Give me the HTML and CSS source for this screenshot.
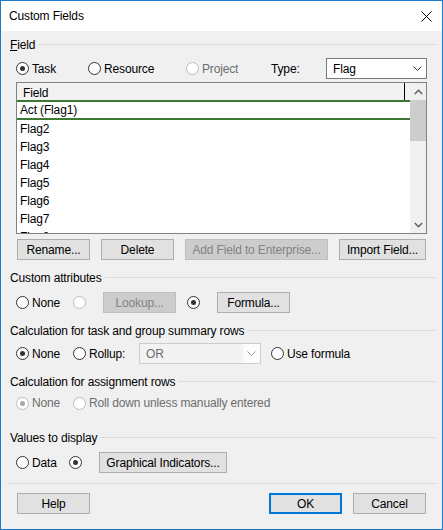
FILE: index.html
```html
<!DOCTYPE html>
<html>
<head>
<meta charset="utf-8">
<link rel="stylesheet" href="styles.css">
</head>
<body>
<div class="window">
  <div class="titlebar">
    <span class="title">Custom Fields</span>
    <svg class="close" width="11" height="11" viewBox="0 0 11 11"><path d="M0.5 0.5 L10.5 10.5 M10.5 0.5 L0.5 10.5" stroke="#000" stroke-width="1" fill="none"/></svg>
  </div>
  <div class="content">
    <div class="group g-field"><span class="glabel"><u>F</u>ield</span><span class="gline"></span></div>
    <div class="row r-type">
      <label class="radio on w-task"><span class="circle"></span>Task</label>
      <label class="radio w-resource"><span class="circle"></span>Resource</label>
      <label class="radio dis w-project"><span class="circle"></span>Project</label>
      <span class="typelabel">Type:</span>
      <div class="combo combo-type"><span class="combo-text">Flag</span><span class="combo-arrow"><svg width="9" height="5" viewBox="0 0 9 5"><path d="M0.5 0.5 L4.5 4.5 L8.5 0.5" stroke="#333" stroke-width="1" fill="none"/></svg></span></div>
    </div>
    <div class="listbox">
      <div class="lb-main">
        <div class="lb-header"><span class="lb-col">Field</span></div>
        <div class="lb-rows">
          <div class="lb-row sel">Act (Flag1)</div>
          <div class="lb-row">Flag2</div>
          <div class="lb-row">Flag3</div>
          <div class="lb-row">Flag4</div>
          <div class="lb-row">Flag5</div>
          <div class="lb-row">Flag6</div>
          <div class="lb-row">Flag7</div>
          <div class="lb-row">Flag8</div>
        </div>
      </div>
      <div class="scrollbar">
        <div class="sb-btn"><svg width="9" height="6" viewBox="0 0 9 6"><path d="M0.8 5 L4.5 1.3 L8.2 5" stroke="#606060" stroke-width="1.5" fill="none"/></svg></div>
        <div class="sb-thumb"></div>
        <div class="sb-track"></div>
        <div class="sb-btn"><svg width="9" height="6" viewBox="0 0 9 6"><path d="M0.8 1 L4.5 4.7 L8.2 1" stroke="#606060" stroke-width="1.5" fill="none"/></svg></div>
      </div>
    </div>
    <div class="btnrow r-buttons">
      <button class="btn w-73">Rename...</button>
      <button class="btn w-73">Delete</button>
      <button class="btn disabled w-add">Add Field to Enterprise...</button>
      <button class="btn w-import">Import Field...</button>
    </div>

    <div class="group g-custom"><span class="glabel">Custom attributes</span><span class="gline"></span></div>
    <div class="row r-custom">
      <label class="radio w-none"><span class="circle"></span>None</label>
      <label class="radio dis w-30"><span class="circle"></span></label>
      <button class="btn disabled w-73">Lookup...</button>
      <label class="radio on w-30 ml-11"><span class="circle"></span></label>
      <button class="btn w-73">Formula...</button>
    </div>

    <div class="group g-calc"><span class="glabel">Calculation for task and group summary rows</span><span class="gline"></span></div>
    <div class="row r-calc">
      <label class="radio on w-none2"><span class="circle"></span>None</label>
      <label class="radio w-rollup"><span class="circle"></span>Rollup:</label>
      <div class="combo combo-dis"><span class="combo-text">OR</span><span class="combo-arrow"><svg width="9" height="5" viewBox="0 0 9 5"><path d="M0.5 0.5 L4.5 4.5 L8.5 0.5" stroke="#a0a0a0" stroke-width="1" fill="none"/></svg></span></div>
      <label class="radio ml-10"><span class="circle"></span>Use formula</label>
    </div>

    <div class="group g-assign"><span class="glabel">Calculation for assignment rows</span><span class="gline"></span></div>
    <div class="row r-assign">
      <label class="radio dis on w-none"><span class="circle"></span>None</label>
      <label class="radio dis"><span class="circle"></span>Roll down unless manually entered</label>
    </div>

    <div class="group g-values"><span class="glabel">Values to display</span><span class="gline"></span></div>
    <div class="row r-values">
      <label class="radio w-data"><span class="circle"></span>Data</label>
      <label class="radio on w-30"><span class="circle"></span></label>
      <button class="btn w-graph">Graphical Indicators...</button>
    </div>

    <div class="separator"></div>

    <div class="btnrow r-bottom">
      <button class="btn w-73">Help</button>
      <span class="spacer"></span>
      <button class="btn default w-73">OK</button>
      <button class="btn w-73">Cancel</button>
    </div>
  </div>
</div>
</body>
</html>
```
FILE: styles.css
```css
* { box-sizing: border-box; }
html, body { margin: 0; padding: 0; }
body {
  width: 443px;
  height: 530px;
  font-family: "Liberation Sans", Arial, sans-serif;
  font-size: 12px;
  letter-spacing: -0.15px;
  color: #000;
  background: #fff;
}
.window {
  width: 443px;
  height: 530px;
  border: 1px solid #1979ca;
  background: #f0f0f0;
  display: flex;
  flex-direction: column;
}
.titlebar {
  height: 30px;
  flex: none;
  background: #fff;
  display: flex;
  align-items: center;
  justify-content: space-between;
  padding: 0 10px 0 8px;
}
.title { font-size: 12px; }
.close { display: block; margin-top: 1px; }

.content {
  padding: 0 6px 0 9px;
  display: flex;
  flex-direction: column;
}

.group {
  display: flex;
  align-items: center;
  gap: 3px;
  height: 16px;
  flex: none;
}
.glabel { white-space: nowrap; }
.gline { flex: 1; height: 1px; background: #dcdcdc; margin-top: -1px; }

.row {
  display: flex;
  align-items: center;
  padding-left: 6px;
  flex: none;
}

.radio {
  display: flex;
  align-items: center;
  gap: 3px;
  white-space: nowrap;
  flex: none;
}
.circle {
  width: 13px;
  height: 13px;
  border: 1px solid #333;
  border-radius: 50%;
  background: #fff;
  display: flex;
  align-items: center;
  justify-content: center;
  flex: none;
}
.radio.on .circle::after {
  content: "";
  width: 5px;
  height: 5px;
  border-radius: 50%;
  background: #333;
}
.radio.dis { color: #6d6d6d; }
.radio.dis .circle { border-color: #bcbcbc; }
.radio.dis.on .circle::after { background: #a8a8a8; }

.w-task { width: 72px; }
.w-resource { width: 98px; }
.w-project { width: 85px; }
.w-none { width: 57px; }
.w-none2 { width: 57px; }
.w-rollup { width: 66px; }
.w-data { width: 53px; }
.w-30 { width: 30px; }
.ml-11 { margin-left: 11px; }
.ml-10 { margin-left: 10px; }

.typelabel { width: 55px; flex: none; }

.combo {
  display: flex;
  align-items: stretch;
  height: 21px;
  flex: none;
}
.combo-type {
  width: 101px;
  border: 1px solid #7a7a7a;
  background: #fff;
}
.combo-text {
  flex: 1;
  display: flex;
  align-items: center;
  padding-left: 6px;
}
.combo-arrow {
  width: 17px;
  display: flex;
  align-items: center;
  justify-content: center;
}
.combo-dis {
  width: 122px;
  border: 1px solid #cccccc;
  background: #fcfcfc;
  color: #6d6d6d;
}
.combo-dis .combo-text { background: #f3f3f3; }

.r-type { margin-top: 5px; height: 21px; }

.listbox {
  margin-top: 3px;
  margin-left: 6px;
  width: 411px;
  height: 152px;
  border: 1px solid #828282;
  background: #fff;
  display: flex;
  flex: none;
}
.lb-main {
  flex: 1;
  display: flex;
  flex-direction: column;
  overflow: hidden;
}
.lb-header {
  height: 17px;
  flex: none;
  background: #f2f2f2;
  display: flex;
}
.lb-col {
  width: 388px;
  border-right: 1px solid #000;
  padding-left: 6px;
  padding-top: 3px;
  line-height: 14px;
}
.lb-rows { flex: 1; overflow: hidden; }
.lb-row {
  height: 18px;
  line-height: 18px;
  padding-left: 3px;
  white-space: nowrap;
}
.lb-row.sel {
  height: 20px;
  line-height: 16px;
  border-top: 2px solid #3b7a30;
  border-bottom: 2px solid #3b7a30;
}
.scrollbar {
  width: 16px;
  flex: none;
  background: #f0f0f0;
  display: flex;
  flex-direction: column;
}
.sb-btn {
  height: 17px;
  flex: none;
  display: flex;
  align-items: center;
  justify-content: center;
}
.sb-thumb { height: 41px; flex: none; background: #cdcdcd; }
.sb-track { flex: 1; }

.btnrow {
  display: flex;
  gap: 11px;
  padding-left: 7px;
  flex: none;
}
.btn {
  height: 21px;
  border: 1px solid #adadad;
  background: #e1e1e1;
  font-family: inherit;
  font-size: 12px;
  letter-spacing: -0.15px;
  color: #000;
  padding: 0;
  display: flex;
  align-items: center;
  justify-content: center;
  flex: none;
  white-space: nowrap;
}
.btn.disabled {
  background: #cccccc;
  border-color: #bfbfbf;
  color: #838383;
}
.btn.default { border: 2px solid #0078d7; }
.w-73 { width: 73px; }
.w-add { width: 143px; }
.w-import { width: 87px; }
.w-graph { width: 128px; }
.spacer { flex: 1; margin-left: -11px; }

.r-buttons { margin-top: 5px; }

.g-field { margin-top: 6px; }
.g-custom { margin-top: 10px; }
.r-custom { margin-top: 6px; height: 21px; }
.g-calc { margin-top: 10px; }
.r-calc { margin-top: 4px; height: 21px; }
.g-assign { margin-top: 10px; }
.r-assign { margin-top: 3px; height: 20px; }
.g-values { margin-top: 17px; }
.r-values { margin-top: 6px; height: 21px; }

.separator {
  margin-top: 10px;
  margin-left: -3px;
  height: 1px;
  background: #dcdcdc;
  flex: none;
}
.r-bottom { margin-top: 9px; padding-right: 10px; }
```
